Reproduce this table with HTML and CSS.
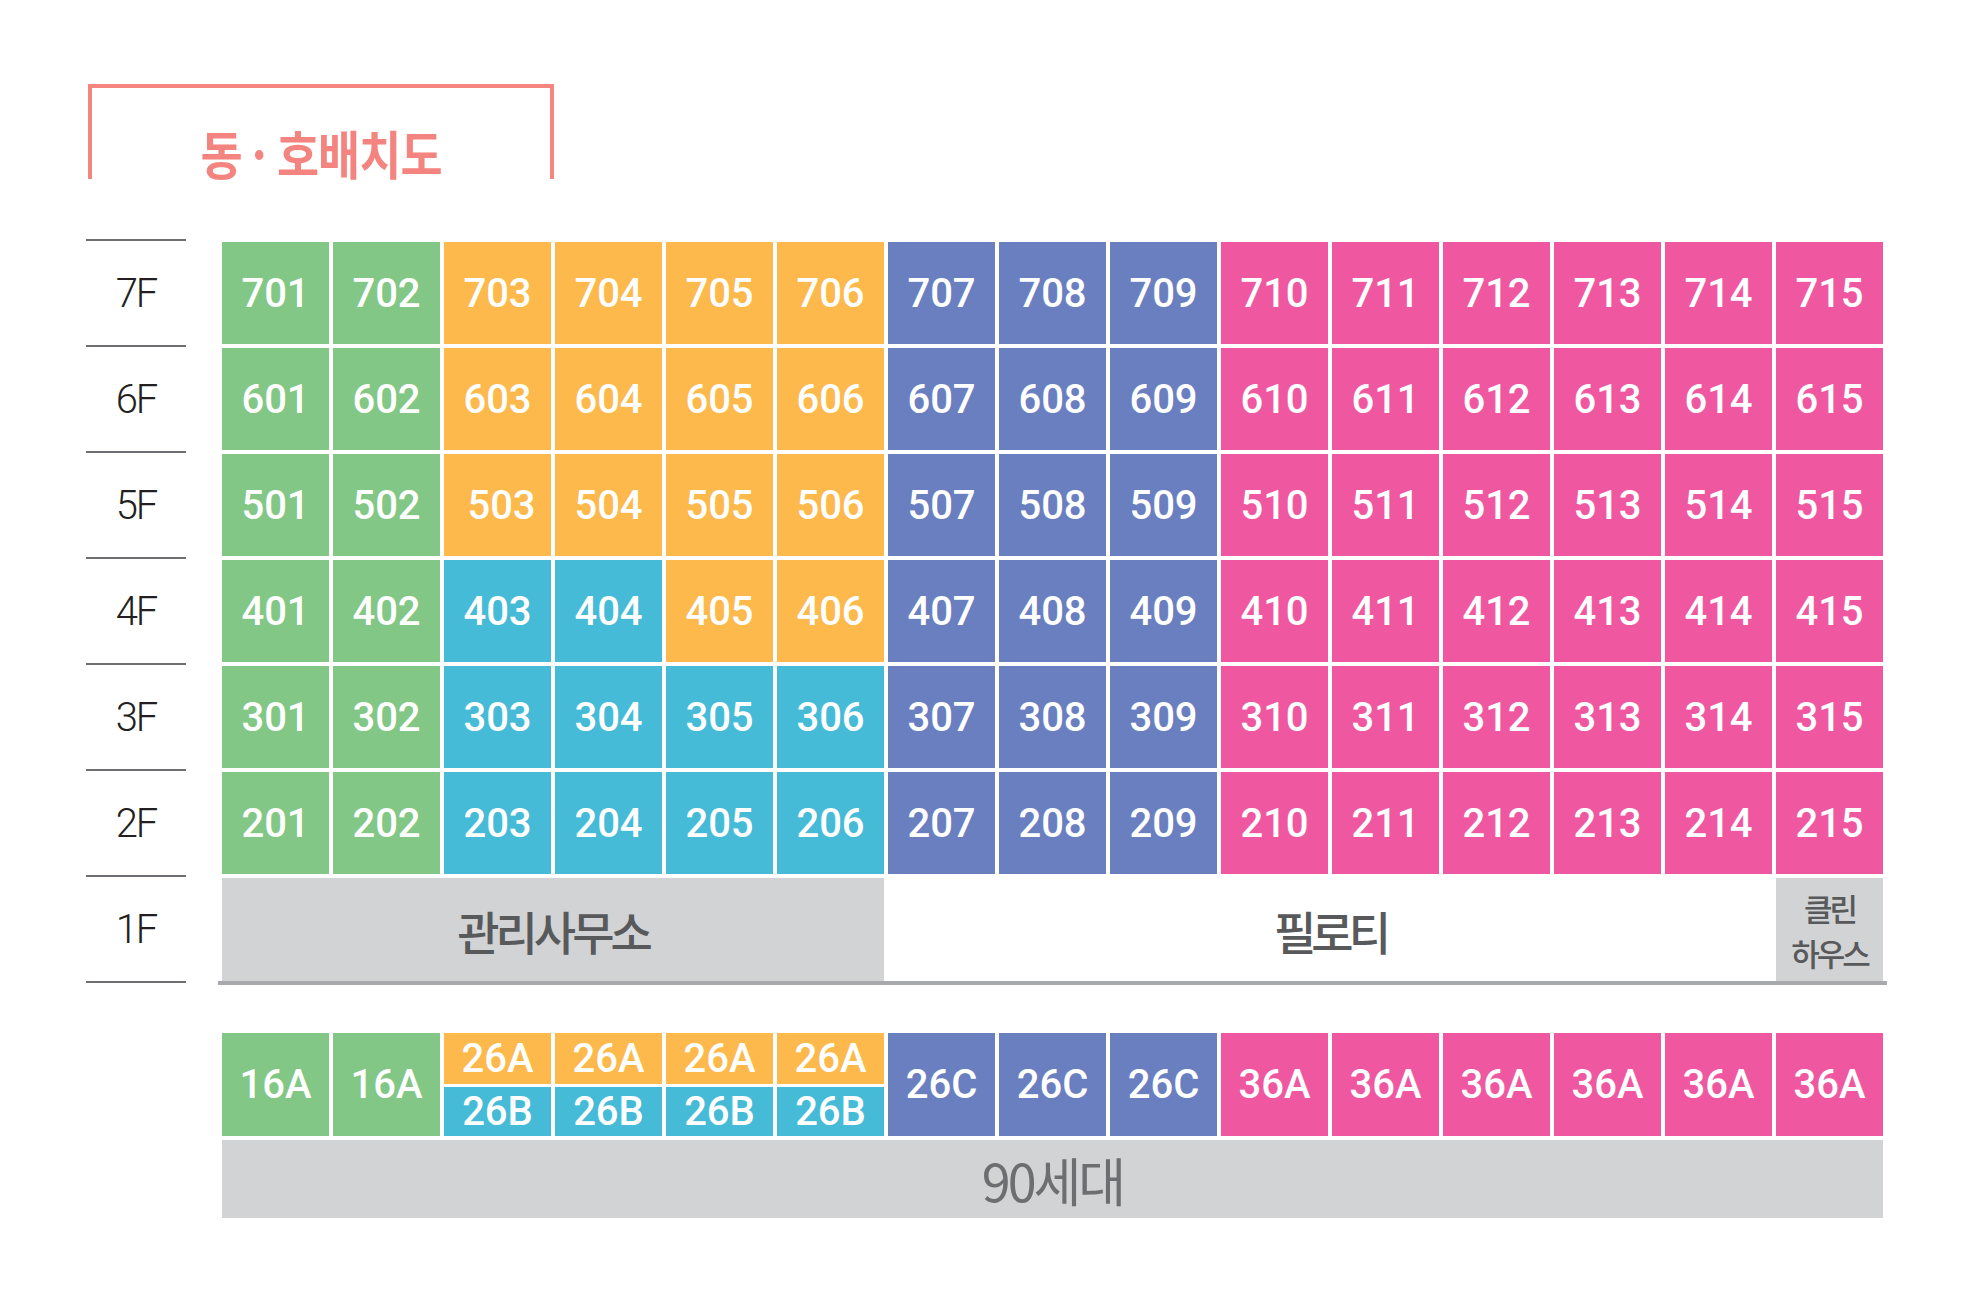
FILE: index.html
```html
<!DOCTYPE html>
<html lang="ko">
<head>
<meta charset="utf-8">
<title>동·호배치도</title>
<link rel="stylesheet" href="styles.css">
</head>
<body>
<div class="page">
  <div class="title-box">
    <h1 class="title">동<span class="dot">·</span>호배치도</h1>
  </div>

  <div class="plan">
    <div class="floors">
      <div class="floor">7F</div>
      <div class="floor">6F</div>
      <div class="floor">5F</div>
      <div class="floor">4F</div>
      <div class="floor">3F</div>
      <div class="floor">2F</div>
      <div class="floor floor-last">1F</div>
    </div>

    <div class="building">
      <div class="grid">
        <div class="unit green">701</div><div class="unit green">702</div><div class="unit orange">703</div><div class="unit orange">704</div><div class="unit orange">705</div><div class="unit orange">706</div><div class="unit purple">707</div><div class="unit purple">708</div><div class="unit purple">709</div><div class="unit pink">710</div><div class="unit pink">711</div><div class="unit pink">712</div><div class="unit pink">713</div><div class="unit pink">714</div><div class="unit pink">715</div>
        <div class="unit green">601</div><div class="unit green">602</div><div class="unit orange">603</div><div class="unit orange">604</div><div class="unit orange">605</div><div class="unit orange">606</div><div class="unit purple">607</div><div class="unit purple">608</div><div class="unit purple">609</div><div class="unit pink">610</div><div class="unit pink">611</div><div class="unit pink">612</div><div class="unit pink">613</div><div class="unit pink">614</div><div class="unit pink">615</div>
        <div class="unit green">501</div><div class="unit green">502</div><div class="unit orange shift">503</div><div class="unit orange">504</div><div class="unit orange">505</div><div class="unit orange">506</div><div class="unit purple">507</div><div class="unit purple">508</div><div class="unit purple">509</div><div class="unit pink">510</div><div class="unit pink">511</div><div class="unit pink">512</div><div class="unit pink">513</div><div class="unit pink">514</div><div class="unit pink">515</div>
        <div class="unit green">401</div><div class="unit green">402</div><div class="unit blue">403</div><div class="unit blue">404</div><div class="unit orange">405</div><div class="unit orange">406</div><div class="unit purple">407</div><div class="unit purple">408</div><div class="unit purple">409</div><div class="unit pink">410</div><div class="unit pink">411</div><div class="unit pink">412</div><div class="unit pink">413</div><div class="unit pink">414</div><div class="unit pink">415</div>
        <div class="unit green">301</div><div class="unit green">302</div><div class="unit blue">303</div><div class="unit blue">304</div><div class="unit blue">305</div><div class="unit blue">306</div><div class="unit purple">307</div><div class="unit purple">308</div><div class="unit purple">309</div><div class="unit pink">310</div><div class="unit pink">311</div><div class="unit pink">312</div><div class="unit pink">313</div><div class="unit pink">314</div><div class="unit pink">315</div>
        <div class="unit green">201</div><div class="unit green">202</div><div class="unit blue">203</div><div class="unit blue">204</div><div class="unit blue">205</div><div class="unit blue">206</div><div class="unit purple">207</div><div class="unit purple">208</div><div class="unit purple">209</div><div class="unit pink">210</div><div class="unit pink">211</div><div class="unit pink">212</div><div class="unit pink">213</div><div class="unit pink">214</div><div class="unit pink">215</div>
      </div>
      <div class="ground">
        <div class="office">관리사무소</div>
        <div class="pilotis">필로티</div>
        <div class="clean"><span>클린</span><span>하우스</span></div>
      </div>
    </div>
  </div>

  <div class="types">
    <div class="type-row">
      <div class="unit green">16A</div>
      <div class="unit green">16A</div>
      <div class="split"><div class="half orange">26A</div><div class="half blue">26B</div></div>
      <div class="split"><div class="half orange">26A</div><div class="half blue">26B</div></div>
      <div class="split"><div class="half orange">26A</div><div class="half blue">26B</div></div>
      <div class="split"><div class="half orange">26A</div><div class="half blue">26B</div></div>
      <div class="unit purple">26C</div>
      <div class="unit purple">26C</div>
      <div class="unit purple">26C</div>
      <div class="unit pink">36A</div>
      <div class="unit pink">36A</div>
      <div class="unit pink">36A</div>
      <div class="unit pink">36A</div>
      <div class="unit pink">36A</div>
      <div class="unit pink">36A</div>
    </div>
    <div class="total">90세대</div>
  </div>
</div>
</body>
</html>
```

FILE: styles.css
```css
* {
  box-sizing: border-box;
}

html, body {
  margin: 0;
  padding: 0;
  background: #ffffff;
}

body {
  width: 1975px;
  height: 1310px;
  overflow: hidden;
  font-family: "Noto Sans CJK KR", "Noto Sans", sans-serif;
}

.page {
  padding-top: 84px;
}

/* ---------- title ---------- */
.title-box {
  margin-left: 88px;
  width: 466px;
  height: 95px;
  border: 4px solid #f4857f;
  border-bottom: none;
  display: flex;
  justify-content: center;
  align-items: flex-end;
}

.title {
  margin: 0 0 -6px 0;
  padding-left: 0;
  font-family: "Noto Sans CJK KR", sans-serif;
  font-weight: 700;
  font-size: 52px;
  line-height: 64px;
  letter-spacing: -1px;
  color: #f4847f;
  white-space: nowrap;
  transform: scaleX(0.88);
}

.title .dot {
  display: inline-block;
  width: 40px;
  text-align: center;
  letter-spacing: 0;
}

/* ---------- plan ---------- */
.plan {
  margin-top: 60px;
  display: flex;
  align-items: flex-start;
}

.floors {
  margin-left: 86px;
  width: 100px;
}

.floor {
  height: 106px;
  border-top: 2px solid #6d6e71;
  display: flex;
  align-items: center;
  justify-content: center;
  font-family: "Roboto", "Liberation Sans", sans-serif;
  font-weight: 300;
  font-size: 40px;
  letter-spacing: -2px;
  color: #231f20;
}

.floor-last {
  height: 108px;
  border-bottom: 2px solid #6d6e71;
}

.building {
  margin-left: 36px;
  padding-top: 3px;
}

.grid {
  display: grid;
  grid-template-columns: repeat(15, 107px);
  grid-auto-rows: 102px;
  gap: 4px;
}

.unit,
.half {
  display: flex;
  align-items: center;
  justify-content: center;
  color: #ffffff;
  font-family: "Roboto", "Liberation Sans", sans-serif;
  font-weight: 500;
  font-size: 40px;
  letter-spacing: 0;
}

.shift {
  padding-left: 8px;
}

.green  { background: #82c785; }
.orange { background: #fdb94b; }
.blue   { background: #45bbd7; }
.purple { background: #6a7fbf; }
.pink   { background: #ef58a0; }

.ground {
  margin: 4px -4px 0 -4px;
  padding: 0 4px;
  height: 107px;
  border-bottom: 4px solid #a7a9ac;
  display: grid;
  grid-template-columns: repeat(15, 107px);
  gap: 4px;
}

.office,
.pilotis,
.clean {
  display: flex;
  align-items: center;
  justify-content: center;
  color: #58595b;
  font-family: "Noto Sans CJK KR", sans-serif;
  font-weight: 500;
}

.office {
  grid-column: 1 / 7;
  background: #d1d3d4;
  font-size: 46px;
  letter-spacing: -4px;
}

.pilotis {
  grid-column: 7 / 15;
  background: #ffffff;
  font-size: 46px;
  letter-spacing: -5px;
}

.clean {
  grid-column: 15 / 16;
  background: #d1d3d4;
  flex-direction: column;
  font-size: 31px;
  line-height: 45px;
  letter-spacing: -3px;
}

.clean span {
  display: block;
  height: 45px;
}

/* ---------- types ---------- */
.types {
  margin-top: 48px;
  margin-left: 222px;
  width: 1661px;
}

.type-row {
  display: grid;
  grid-template-columns: repeat(15, 107px);
  grid-template-rows: 103px;
  gap: 4px;
}

.split {
  display: grid;
  grid-template-rows: 51px 49px;
  row-gap: 3px;
}

.total {
  margin-top: 4px;
  height: 78px;
  background: #d1d3d4;
  display: flex;
  align-items: center;
  justify-content: center;
  color: #6d6e71;
  font-family: "Noto Sans CJK KR", sans-serif;
  font-weight: 400;
  font-size: 52px;
  letter-spacing: -3px;
}
```
